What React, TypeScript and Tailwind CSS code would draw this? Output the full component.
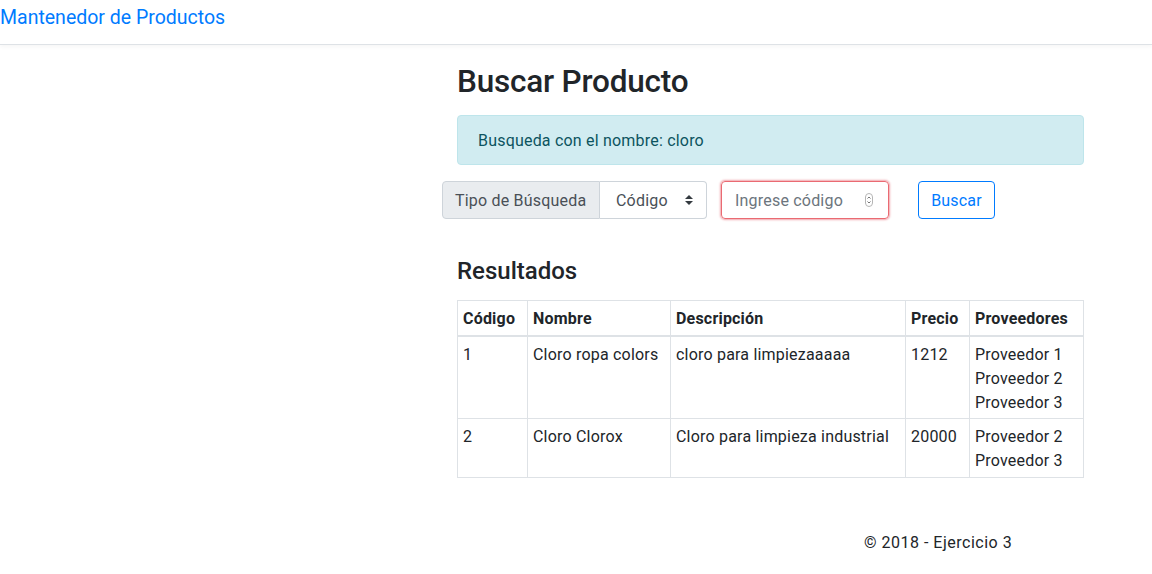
import React from "react";

const rows = [
  { code: "1", name: "Cloro ropa colors", desc: "cloro para limpiezaaaaa", price: "1212", providers: ["Proveedor 1", "Proveedor 2", "Proveedor 3"] },
  { code: "2", name: "Cloro Clorox", desc: "Cloro para limpieza industrial", price: "20000", providers: ["Proveedor 2", "Proveedor 3"] },
];

function SelectArrows() {
  return (
    <svg width="8" height="10" viewBox="0 0 8 10" className="shrink-0">
      <path d="M4 0 L8 4 H0 Z" fill="#343a40" />
      <path d="M4 10 L8 6 H0 Z" fill="#343a40" />
    </svg>
  );
}

function Spinner() {
  return (
    <svg width="8" height="14" viewBox="0 0 8 14" className="shrink-0">
      <rect x="0.5" y="0.5" width="7" height="13" rx="3.5" fill="#fff" stroke="#b5b5b5" />
      <path d="M2.5 5.5 L4 4 L5.5 5.5" fill="none" stroke="#666" strokeWidth="0.9" />
      <path d="M2.5 8.5 L4 10 L5.5 8.5" fill="none" stroke="#666" strokeWidth="0.9" />
    </svg>
  );
}

export default function App() {
  const cell = "border border-[#dee2e6] px-[5px] pt-[6px]";
  return (
    <div className="min-h-[574px] bg-white text-[#212529] font-['Roboto',sans-serif] text-base leading-6 tracking-[0.2px]">
      <nav className="h-[45px] border-b border-[#dee2e6] shadow-[0_2px_4px_rgba(0,0,0,0.04)] flex items-center">
        <a className="text-[19.5px] leading-[30px] tracking-normal text-[#007bff] -mt-[8px] pl-0">Mantenedor de Productos</a>
      </nav>

      <main className="ml-[457px] w-[627px] pt-[18px]">
        <h1 className="text-[31.5px] leading-[38px] font-medium tracking-[-0.2px] mb-[14px]">Buscar Producto</h1>

        <div className="rounded-[4px] border border-[#bee5eb] bg-[#d1ecf1] text-[#0c5460] px-5 pt-[13px] pb-[11px] mb-4">
          Busqueda con el nombre: cloro
        </div>

        <div className="flex items-center -ml-[15px] h-[38px]">
          <div className="flex h-[38px]">
            <span className="flex items-center px-3 pt-[2px] bg-[#e9ecef] border border-[#ced4da] rounded-l-[4px] text-[#495057] w-[158px]">
              Tipo de Búsqueda
            </span>
            <div className="flex items-center justify-between w-[107px] pl-4 pr-[13px] border border-l-0 border-[#ced4da] rounded-r-[4px] text-[#495057]">
              <span className="pt-[2px]">Código</span>
              <SelectArrows />
            </div>
          </div>
          <div className="ml-[14px] flex items-center justify-between w-[168px] h-[38px] pl-[13px] pr-[15px] border border-[#ea6a72] rounded-[4px] shadow-[0_0_2px_1px_rgba(220,53,69,0.45)] text-[#6c757d]">
            <span className="pt-[2px]">Ingrese código</span>
            <Spinner />
          </div>
          <button className="ml-[29px] h-[38px] w-[77px] pt-[2px] border border-[#007bff] rounded-[4px] text-[#007bff]">
            Buscar
          </button>
        </div>

        <h4 className="text-[24px] leading-[29px] font-medium tracking-normal mt-[38px] mb-[14px]">Resultados</h4>

        <table className="w-[627px] border-collapse border border-[#dee2e6]">
          <thead>
            <tr className="text-left">
              <th className={`${cell} w-[70px] border-b-2 pb-[4px] font-bold`}>Código</th>
              <th className={`${cell} w-[143px] border-b-2 pb-[4px] font-bold`}>Nombre</th>
              <th className={`${cell} w-[235px] border-b-2 pb-[4px] font-bold`}>Descripción</th>
              <th className={`${cell} w-[64px] border-b-2 pb-[4px] font-bold`}>Precio</th>
              <th className={`${cell} border-b-2 pb-[4px] font-bold`}>Proveedores</th>
            </tr>
          </thead>
          <tbody>
            {rows.map((r, i) => {
              const td = `${cell} ${i === rows.length - 1 ? "pb-[4px]" : "pb-[3px]"}`;
              return (
                <tr key={r.code} className="align-top">
                  <td className={td}>{r.code}</td>
                  <td className={td}>{r.name}</td>
                  <td className={td}>{r.desc}</td>
                  <td className={td}>{r.price}</td>
                  <td className={td}>
                    {r.providers.map((p) => (
                      <div key={p}>{p}</div>
                    ))}
                  </td>
                </tr>
              );
            })}
          </tbody>
        </table>
      </main>

      <footer className="ml-[864px] mt-[53px] tracking-[0.5px]">© 2018 - Ejercicio 3</footer>
    </div>
  );
}
